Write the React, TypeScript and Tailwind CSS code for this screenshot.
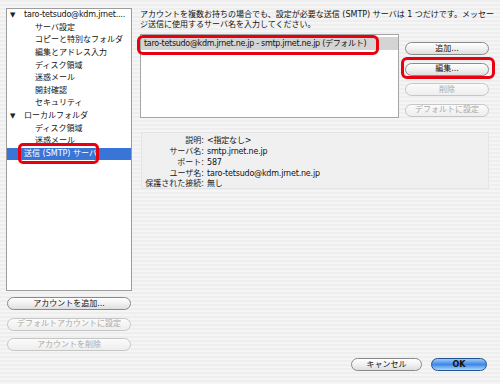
import type { ReactNode } from 'react';

const font = "font-['DejaVu_Sans','Noto_Sans_CJK_JP',sans-serif]";

interface AquaButtonProps {
  children: ReactNode;
  disabled?: boolean;
  className?: string;
}

function AquaButton({ children, disabled, className = '' }: AquaButtonProps) {
  return (
    <div
      className={`flex h-[13px] items-center justify-center rounded-full border text-[8px] leading-none ${
        disabled
          ? 'border-[#c6c6c6] bg-linear-to-b from-[#fbfbfb] to-[#eeeeee] text-[#a9a9a9]'
          : 'border-[#8a8a8a] bg-linear-to-b from-white via-[#f1f1f1] to-[#dedede] text-[#111]'
      } ${className}`}
    >
      {children}
    </div>
  );
}

type TreeRow = { label: string; level: 0 | 1 | 2; open?: boolean; selected?: boolean };

const treeRows: TreeRow[] = [
  { label: 'taro-tetsudo@kdm.jrnet....', level: 0, open: true },
  { label: 'サーバ設定', level: 1 },
  { label: 'コピーと特別なフォルダ', level: 1 },
  { label: '編集とアドレス入力', level: 1 },
  { label: 'ディスク領域', level: 1 },
  { label: '迷惑メール', level: 1 },
  { label: '開封確認', level: 1 },
  { label: 'セキュリティ', level: 1 },
  { label: 'ローカルフォルダ', level: 0, open: true },
  { label: 'ディスク領域', level: 1 },
  { label: '迷惑メール', level: 1 },
  { label: '送信 (SMTP) サーバ', level: 2, selected: true },
];

const details: [string, string][] = [
  ['説明:', '<指定なし>'],
  ['サーバ名:', 'smtp.jrnet.ne.jp'],
  ['ポート:', '587'],
  ['ユーザ名:', 'taro-tetsudo@kdm.jrnet.ne.jp'],
  ['保護された接続:', '無し'],
];

export default function App() {
  return (
    <div
      className={`flex h-[384px] w-[500px] overflow-hidden bg-[repeating-linear-gradient(180deg,#eeeeee_0px,#eeeeee_2px,#f5f5f5_2px,#f5f5f5_4px)] pl-[6px] pt-[8px] text-[#111] ${font}`}
    >
      {/* account tree */}
      <div className="flex w-[126px] flex-col">
        <div className="relative h-[283px] border border-[#9c9c9c] bg-white">
          {treeRows.map((row, i) => (
            <div
              key={i}
              className={`flex h-[12.6px] items-center whitespace-nowrap text-[8px] leading-none ${
                row.selected ? 'bg-[#3875d7] text-white' : ''
              }`}
            >
              {row.level === 0 ? (
                <>
                  <span className="ml-[3px] w-[14px] text-[7px] text-[#222]">▼</span>
                  <span className={i === 0 ? 'tracking-[-0.2px]' : ''}>{row.label}</span>
                </>
              ) : row.level === 2 ? (
                <span className="ml-[17px]">{row.label}</span>
              ) : (
                <span className="ml-[28px]">{row.label}</span>
              )}
            </div>
          ))}
          <div className="absolute left-[11px] top-[134px] h-[21px] w-[81px] rounded-[5px] border-[3px] border-[#e8000e]" />
        </div>
        <div className="mt-[6px] flex flex-col gap-[7.5px] px-[1px]">
          <AquaButton>アカウントを追加...</AquaButton>
          <AquaButton disabled>デフォルトアカウントに設定</AquaButton>
          <AquaButton disabled>アカウントを削除</AquaButton>
        </div>
      </div>

      {/* smtp panel */}
      <div className="ml-[8px] flex flex-1 flex-col pb-[13px] pt-[2px]">
        <div className="whitespace-nowrap text-[8px] leading-[10px]">
          <div>アカウントを複数お持ちの場合でも、設定が必要な送信 (SMTP) サーバは 1 つだけです。メッセー</div>
          <div>ジ送信に使用するサーバ名を入力してください。</div>
        </div>

        <div className="mt-[4px] flex">
          <div className="relative h-[84px] w-[259px] border border-[#a5a5a5] bg-white pt-[2px]">
            <div className="flex h-[13px] items-center whitespace-nowrap bg-[#d4d4d4] pl-[3px] text-[8px] leading-none tracking-[-0.3px]">
              taro-tetsudo@kdm.jrnet.ne.jp - smtp.jrnet.ne.jp (デフォルト)
            </div>
            <div className="absolute -left-[4px] top-[0px] h-[20px] w-[242px] rounded-[6px] border-[3px] border-[#e8000e]" />
          </div>
          <div className="relative ml-[6px] flex w-[84px] flex-col gap-[7.5px] pt-[8px]">
            <AquaButton>追加...</AquaButton>
            <AquaButton>編集...</AquaButton>
            <AquaButton disabled>削除</AquaButton>
            <AquaButton disabled>デフォルトに設定</AquaButton>
            <div className="absolute -left-[4px] top-[23px] h-[22px] w-[94px] rounded-[6px] border-[3px] border-[#e8000e]" />
          </div>
        </div>

        <div className="ml-[1px] mt-[14px] grid h-[57px] w-[348px] grid-cols-[62px_1fr] content-start gap-x-[3px] border border-[#e4e4e4] bg-[#f0f0f0] pt-[3px] text-[8px]">
          {details.map(([k, v]) => (
            <div key={k} className="contents">
              <div className="flex h-[10.75px] items-center justify-end whitespace-nowrap leading-none text-[#222]">{k}</div>
              <div className="flex h-[10.75px] items-center whitespace-nowrap leading-none tracking-[-0.2px]">{v}</div>
            </div>
          ))}
        </div>

        <div className="mt-auto flex justify-end gap-[9px] pr-[13px]">
          <AquaButton className="w-[71px]">キャンセル</AquaButton>
          <div className="flex h-[13px] w-[56px] items-center justify-center rounded-full border border-[#22528f] bg-linear-to-b from-[#9ccaf6] via-[#3f86e2] to-[#a8d8fc] text-[8px] font-bold leading-none text-[#111]">
            OK
          </div>
        </div>
      </div>
    </div>
  );
}
